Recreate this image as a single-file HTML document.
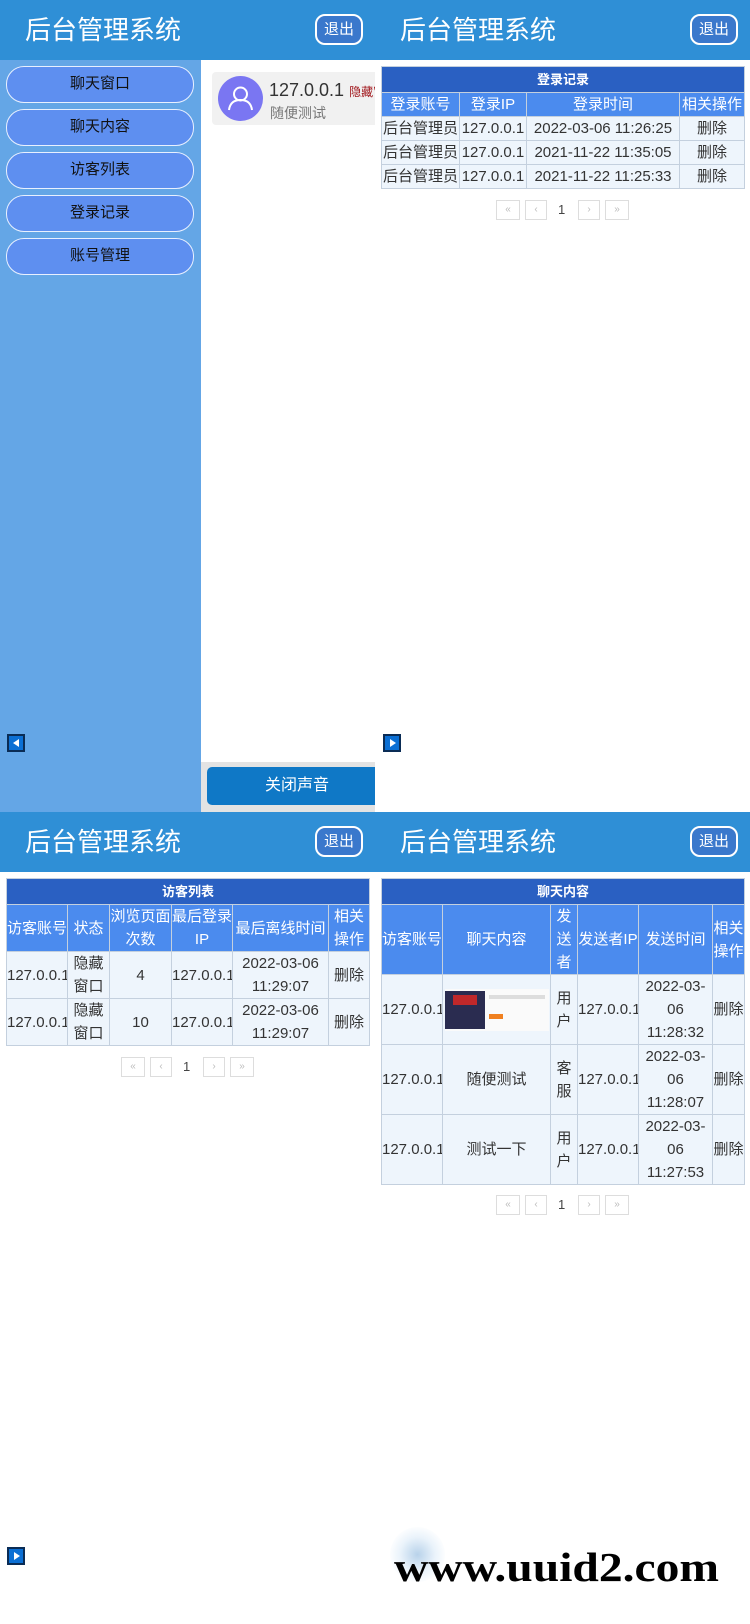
<!DOCTYPE html>
<html><head><meta charset="utf-8"><style>
*{margin:0;padding:0;box-sizing:border-box}
body{width:750px;height:1624px;position:relative;overflow:hidden;background:#fff;font-family:"Liberation Sans","Noto Sans CJK SC",sans-serif;color:#333}
.p{position:absolute;width:375px;height:812px;overflow:hidden;background:#fff}
.hd{position:absolute;left:0;top:0;width:375px;height:60px;background:#2f8fd6}
.hd .t{position:absolute;left:25px;top:13px;font-size:26px;color:#fff;line-height:34px}
.hd .x{position:absolute;left:315px;top:14px;width:48px;height:31px;border:2px solid #fff;border-radius:10px;background:#3a78cc;color:#fff;font-size:15px;line-height:27px;text-align:center}
.side{position:absolute;left:0;top:60px;width:201px;height:752px;background:#64a6e6}
.nb{position:absolute;left:6px;width:188px;height:37px;border:1.5px solid #e8f0ff;border-radius:18px;background:#5e8ff0;color:#111;font-size:15px;line-height:34px;text-align:center}
.arr{position:absolute;width:18px;height:18px;background:#0b6fd4;border:2px solid #0a2c55}
table{position:absolute;border-collapse:collapse;font-size:15px;text-align:center;table-layout:fixed}
td{border:1px solid #c4d0de;background:#eef5fc;line-height:23px;padding:0;overflow:hidden;white-space:nowrap}
th{border:1px solid #c4d0de;background:#4b8bee;color:#fff;font-weight:normal;line-height:23px;padding:0;overflow:hidden}
tr.tt th{background:#2a60c2;font-weight:bold;font-size:13px;height:26px}
.wr td,.wr th{white-space:normal}
.pg{position:absolute;height:20px}
.pg span{position:absolute;top:0;height:20px;border:1px solid #ddd;color:#bbb;font-size:10px;text-align:center;line-height:18px}
.pg b{position:absolute;top:0;font-weight:normal;font-size:13px;color:#444;line-height:20px}
</style></head><body>

<!-- panel 1 -->
<div class="p" style="left:0;top:0">
<div class="side"></div>
<div class="nb" style="top:66px">聊天窗口</div>
<div class="nb" style="top:109px">聊天内容</div>
<div class="nb" style="top:152px">访客列表</div>
<div class="nb" style="top:195px">登录记录</div>
<div class="nb" style="top:238px">账号管理</div>
<div style="position:absolute;left:212px;top:72px;width:170px;height:53px;background:#f1f1f1;border-radius:4px"></div>
<div style="position:absolute;left:218px;top:76px;width:45px;height:45px;border-radius:50%;background:#7a76f2"></div>
<svg style="position:absolute;left:218px;top:76px" width="45" height="45" viewBox="0 0 45 45"><circle cx="22.5" cy="18" r="6.5" fill="none" stroke="#fff" stroke-width="2"/><path d="M11 34 C12 26 17 24 22.5 24 C28 24 33 26 34 34" fill="none" stroke="#fff" stroke-width="2"/></svg>
<div style="position:absolute;left:269px;top:80px;font-size:18px;color:#333;white-space:nowrap">127.0.0.1 <span style="font-size:12px;color:#a0151a">隐藏窗口</span></div>
<div style="position:absolute;left:270px;top:103px;font-size:14px;color:#777">随便测试</div>
<div class="arr" style="left:7px;top:734px;border-width:2px"><svg width="14" height="14" viewBox="0 0 14 14" style="display:block"><path d="M4 7 L10 3 L10 11Z" fill="#fff"/></svg></div>
<div style="position:absolute;left:201px;top:762px;width:174px;height:50px;background:#e3e3e3"></div>
<div style="position:absolute;left:207px;top:767px;width:180px;height:38px;background:#0f78c6;border-radius:5px;color:#fff;font-size:16px;line-height:38px;text-indent:58px">关闭声音</div>
<div class="hd"><div class="t">后台管理系统</div><div class="x">退出</div></div>
</div>

<!-- panel 2 -->
<div class="p" style="left:375px;top:0">
<div class="hd"><div class="t">后台管理系统</div><div class="x">退出</div></div>
<table style="left:6px;top:66px;width:363px">
<colgroup><col style="width:78px"><col style="width:67px"><col style="width:153px"><col style="width:65px"></colgroup>
<tr class="tt"><th colspan="4">登录记录</th></tr>
<tr><th>登录账号</th><th>登录IP</th><th>登录时间</th><th>相关操作</th></tr>
<tr><td>后台管理员</td><td>127.0.0.1</td><td>2022-03-06 11:26:25</td><td>删除</td></tr>
<tr><td>后台管理员</td><td>127.0.0.1</td><td>2021-11-22 11:35:05</td><td>删除</td></tr>
<tr><td>后台管理员</td><td>127.0.0.1</td><td>2021-11-22 11:25:33</td><td>删除</td></tr>
</table>
<div class="pg" style="left:121px;top:200px"><span style="left:0;width:24px">«</span><span style="left:29px;width:22px">‹</span><b style="left:62px">1</b><span style="left:82px;width:22px">›</span><span style="left:109px;width:24px">»</span></div>
<div class="arr" style="left:8px;top:734px"><svg width="14" height="14" viewBox="0 0 14 14" style="display:block"><path d="M5 3 L11 7 L5 11Z" fill="#fff"/></svg></div>
</div>

<!-- panel 3 -->
<div class="p" style="left:0;top:812px">
<div class="hd"><div class="t">后台管理系统</div><div class="x">退出</div></div>
<table class="wr" style="left:6px;top:66px;width:363px">
<colgroup><col style="width:61px"><col style="width:42px"><col style="width:62px"><col style="width:61px"><col style="width:96px"><col style="width:41px"></colgroup>
<tr class="tt"><th colspan="6">访客列表</th></tr>
<tr><th>访客账号</th><th>状态</th><th>浏览页面次数</th><th>最后登录IP</th><th>最后离线时间</th><th>相关操作</th></tr>
<tr><td>127.0.0.1</td><td>隐藏窗口</td><td>4</td><td>127.0.0.1</td><td>2022-03-06 11:29:07</td><td>删除</td></tr>
<tr><td>127.0.0.1</td><td>隐藏窗口</td><td>10</td><td>127.0.0.1</td><td>2022-03-06 11:29:07</td><td>删除</td></tr>
</table>
<div class="pg" style="left:121px;top:245px"><span style="left:0;width:24px">«</span><span style="left:29px;width:22px">‹</span><b style="left:62px">1</b><span style="left:82px;width:22px">›</span><span style="left:109px;width:24px">»</span></div>
<div class="arr" style="left:7px;top:735px"><svg width="14" height="14" viewBox="0 0 14 14" style="display:block"><path d="M5 3 L11 7 L5 11Z" fill="#fff"/></svg></div>
</div>

<!-- panel 4 -->
<div class="p" style="left:375px;top:812px">
<div class="hd"><div class="t">后台管理系统</div><div class="x">退出</div></div>
<table class="wr" style="left:6px;top:66px;width:363px">
<colgroup><col style="width:61px"><col style="width:108px"><col style="width:27px"><col style="width:61px"><col style="width:74px"><col style="width:32px"></colgroup>
<tr class="tt"><th colspan="6">聊天内容</th></tr>
<tr style="height:70px"><th>访客账号</th><th>聊天内容</th><th>发送者</th><th>发送者IP</th><th>发送时间</th><th>相关操作</th></tr>
<tr style="height:70px"><td>127.0.0.1</td><td><div style="position:relative;width:104px;height:42px;margin:0 auto;background:#fafafa"><div style="position:absolute;left:0;top:2px;width:40px;height:38px;background:#2a2c50"></div><div style="position:absolute;left:8px;top:6px;width:24px;height:10px;background:#c0282a"></div><div style="position:absolute;left:44px;top:6px;width:56px;height:4px;background:#ddd"></div><div style="position:absolute;left:44px;top:25px;width:14px;height:5px;background:#f08020"></div></div></td><td>用户</td><td>127.0.0.1</td><td>2022-03-06 11:28:32</td><td>删除</td></tr>
<tr style="height:70px"><td>127.0.0.1</td><td>随便测试</td><td>客服</td><td>127.0.0.1</td><td>2022-03-06 11:28:07</td><td>删除</td></tr>
<tr style="height:70px"><td>127.0.0.1</td><td>测试一下</td><td>用户</td><td>127.0.0.1</td><td>2022-03-06 11:27:53</td><td>删除</td></tr>
</table>
<div class="pg" style="left:121px;top:383px"><span style="left:0;width:24px">«</span><span style="left:29px;width:22px">‹</span><b style="left:62px">1</b><span style="left:82px;width:22px">›</span><span style="left:109px;width:24px">»</span></div>
<div style="position:absolute;left:15px;top:715px;width:55px;height:55px;border-radius:50%;background:radial-gradient(circle,#b8d2ea 0%,rgba(220,235,248,0.6) 45%,rgba(255,255,255,0) 75%)"></div>
<div style="position:absolute;left:19px;top:733px;font-family:'Liberation Serif',serif;font-weight:bold;font-size:41px;color:#000;line-height:44px;transform:scaleX(1.16);transform-origin:0 0;white-space:nowrap">www.uuid2.com</div>
</div>
</body></html>
